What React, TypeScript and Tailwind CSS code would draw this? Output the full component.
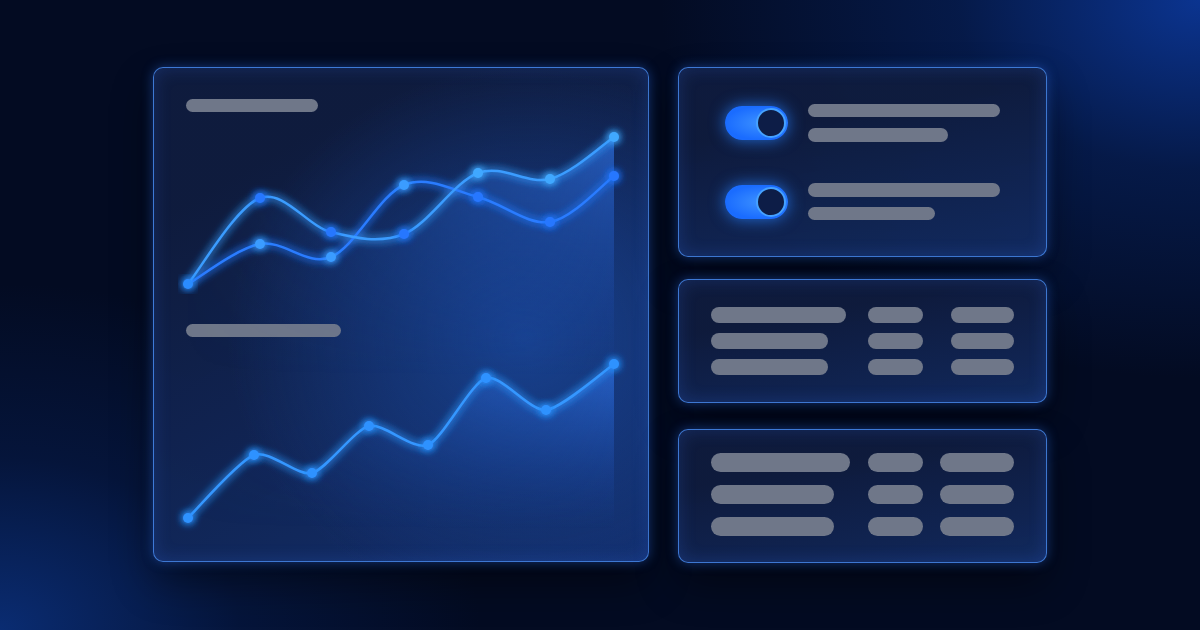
import React from "react";

type Pt = [number, number];

// Catmull-Rom → cubic bezier, for the soft chart lines
function smooth(pts: Pt[], t = 1 / 6): string {
  let d = `M${pts[0][0]},${pts[0][1]}`;
  for (let i = 0; i < pts.length - 1; i++) {
    const p0 = pts[i - 1] || pts[i];
    const p1 = pts[i];
    const p2 = pts[i + 1];
    const p3 = pts[i + 2] || p2;
    const c1x = p1[0] + (p2[0] - p0[0]) * t;
    const c1y = p1[1] + (p2[1] - p0[1]) * t;
    const c2x = p2[0] - (p3[0] - p1[0]) * t;
    const c2y = p2[1] - (p3[1] - p1[1]) * t;
    d += ` C${c1x},${c1y} ${c2x},${c2y} ${p2[0]},${p2[1]}`;
  }
  return d;
}

function area(pts: Pt[], bottom: number, t?: number): string {
  const last = pts[pts.length - 1];
  return `${smooth(pts, t)} L${last[0]},${bottom} L${pts[0][0]},${bottom} Z`;
}

const lineA: Pt[] = [[9, 159], [81, 119], [152, 132], [225, 60], [299, 72], [371, 97], [435, 51]];
const lineB: Pt[] = [[9, 159], [81, 73], [152, 107], [225, 109], [299, 48], [371, 54], [435, 12]];
const lineC: Pt[] = [[9, 168], [75, 105], [133, 123], [190, 76], [249, 95], [307, 28], [367, 60], [435, 14]];

function Bar({ w, h = 13 }: { w: number; h?: number }) {
  return <div className="rounded-full bg-[#6f7789]" style={{ width: w, height: h }} />;
}

function Dots({ pts, color }: { pts: Pt[]; color: string }) {
  return (
    <g filter="url(#glow)">
      {pts.map(([x, y], i) => (
        <circle key={i} cx={x} cy={y} r={5} fill={color} />
      ))}
    </g>
  );
}

function SharedDefs() {
  return (
    <defs>
      <filter id="glow" x="-50%" y="-50%" width="200%" height="200%">
        <feGaussianBlur stdDeviation="4" result="b" />
        <feMerge>
          <feMergeNode in="b" />
          <feMergeNode in="b" />
          <feMergeNode in="SourceGraphic" />
        </feMerge>
      </filter>
      <linearGradient id="vfade" x1="0" y1="0" x2="0" y2="1">
        <stop offset="0" stopColor="#2f74e8" stopOpacity="0.7" />
        <stop offset="1" stopColor="#1b4ab0" stopOpacity="0" />
      </linearGradient>
      <linearGradient id="hfade" x1="0" y1="0" x2="1" y2="0">
        <stop offset="0" stopColor="#000" />
        <stop offset="0.35" stopColor="#444" />
        <stop offset="1" stopColor="#fff" />
      </linearGradient>
      <mask id="hmask" maskUnits="userSpaceOnUse" x="0" y="-20" width="445" height="300">
        <rect x="0" y="-20" width="445" height="300" fill="url(#hfade)" />
      </mask>
    </defs>
  );
}

function TopChart() {
  return (
    <svg width={445} height={175} viewBox="0 0 445 175" className="block -ml-[7px] mt-[13px] overflow-visible">
      <SharedDefs />
      <path d={area(lineB, 250)} fill="url(#vfade)" mask="url(#hmask)" />
      <g filter="url(#glow)" fill="none" strokeWidth={2.5} strokeLinecap="round">
        <path d={smooth(lineA)} stroke="#2a7bff" />
        <path d={smooth(lineB)} stroke="#3a9cff" />
      </g>
      <Dots pts={lineA.slice(1, 4)} color="#3a9cff" />
      <Dots pts={lineA.slice(4)} color="#2777ff" />
      <Dots pts={lineB.slice(1, 4)} color="#2777ff" />
      <Dots pts={lineB.slice(4)} color="#41a8ff" />
      <Dots pts={[lineA[0]]} color="#2b8cff" />
    </svg>
  );
}

function BottomChart() {
  return (
    <svg width={445} height={180} viewBox="0 0 445 180" className="block -ml-[7px] mt-[13px] overflow-visible">
      <path d={area(lineC, 178, 1 / 8)} fill="url(#vfade)" mask="url(#hmask)" />
      <path d={smooth(lineC, 1 / 8)} stroke="#3497ff" strokeWidth={2.5} fill="none" strokeLinecap="round" filter="url(#glow)" />
      <Dots pts={lineC} color="#2f92ff" />
    </svg>
  );
}

function Toggle() {
  return (
    <div className="flex h-[34px] w-[63px] items-center justify-end rounded-full bg-[radial-gradient(ellipse_at_60%_50%,#3d92ff,#1a6cff_70%)] pr-[2px] shadow-[0_0_16px_rgba(40,130,255,0.8)]">
      <div className="h-[30px] w-[30px] rounded-full border-[2.5px] border-[#46a2ff] bg-[#0d1d47]" />
    </div>
  );
}

const panel =
  "rounded-[10px] border-[1.5px] border-[#4282e2]/90 shadow-[0_0_12px_rgba(50,120,255,0.4),0_20px_40px_rgba(0,0,0,0.45),inset_0_0_18px_rgba(60,120,255,0.2)]";

const smallPanel =
  "bg-[linear-gradient(170deg,rgba(15,28,62,0.95)_30%,rgba(19,45,100,0.9))]";

export default function App() {
  return (
    <div className="h-[630px] w-[1200px] overflow-hidden bg-[#030b22] bg-[radial-gradient(ellipse_45%_60%_at_100%_0%,#0b3490_0%,rgba(8,40,110,0.5)_45%,transparent_100%),radial-gradient(ellipse_40%_55%_at_0%_100%,#0a2c72_0%,rgba(8,35,95,0.4)_50%,transparent_100%)]">
      <div className="flex pl-[153px] pt-[67px]">
        {/* chart panel */}
        <div
          className={`${panel} h-[495px] w-[496px] pl-[32px] pt-[31px] bg-[radial-gradient(ellipse_60%_55%_at_75%_55%,rgba(24,66,145,0.95),transparent),linear-gradient(150deg,rgba(15,28,62,0.97)_20%,rgba(20,50,115,0.92))]`}
        >
          <Bar w={132} />
          <TopChart />
          <div className="mt-[24px]">
            <Bar w={155} />
          </div>
          <BottomChart />
        </div>

        <div className="ml-[29px] flex w-[369px] flex-col">
          {/* toggles */}
          <div className={`${panel} ${smallPanel} h-[190px] pl-[46px] pt-[36px]`}>
            <div className="flex items-center gap-[20px]">
              <Toggle />
              <div className="flex flex-col gap-[11px]">
                <Bar w={192} />
                <Bar w={140} h={14} />
              </div>
            </div>
            <div className="mt-[41px] flex items-center gap-[20px]">
              <Toggle />
              <div className="flex flex-col gap-[10px]">
                <Bar w={192} h={14} />
                <Bar w={127} />
              </div>
            </div>
          </div>

          {/* table 1 */}
          <div className={`${panel} ${smallPanel} mt-[22px] h-[124px] pl-[32px] pt-[27px]`}>
            <div className="flex flex-col gap-[10px]">
              {[135, 117, 117].map((w, i) => (
                <div key={i} className="flex items-center">
                  <div className="w-[157px]">
                    <Bar w={w} h={16} />
                  </div>
                  <div className="w-[83px]">
                    <Bar w={55} h={16} />
                  </div>
                  <Bar w={63} h={16} />
                </div>
              ))}
            </div>
          </div>

          {/* table 2 */}
          <div className={`${panel} ${smallPanel} mt-[26px] h-[134px] pl-[32px] pt-[23px]`}>
            <div className="flex flex-col gap-[13px]">
              {[139, 123, 123].map((w, i) => (
                <div key={i} className="flex items-center">
                  <div className="w-[157px]">
                    <Bar w={w} h={19} />
                  </div>
                  <div className="w-[72px]">
                    <Bar w={55} h={19} />
                  </div>
                  <Bar w={74} h={19} />
                </div>
              ))}
            </div>
          </div>
        </div>
      </div>
    </div>
  );
}
